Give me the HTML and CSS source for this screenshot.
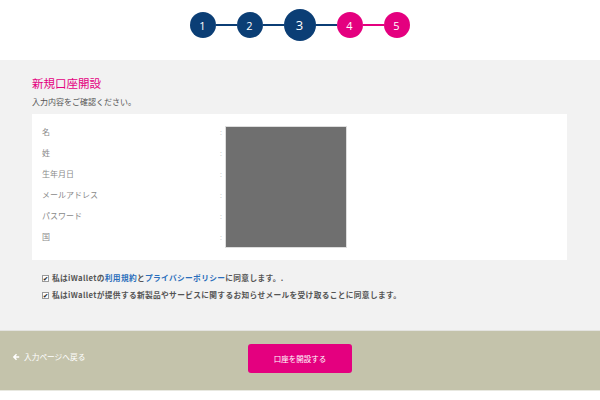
FILE: index.html
```html
<!DOCTYPE html>
<html lang="ja">
<head>
<meta charset="utf-8">
<link rel="stylesheet" href="styles.css">
</head>
<body>
<header class="steps">
  <div class="step done">1</div>
  <div class="line blue"></div>
  <div class="step done">2</div>
  <div class="line blue"></div>
  <div class="step current">3</div>
  <div class="line blue"></div>
  <div class="step todo">4</div>
  <div class="line pink"></div>
  <div class="step todo">5</div>
</header>
<main class="content">
  <h1 class="title">新規口座開設</h1>
  <p class="lead">入力内容をご確認ください。</p>
  <section class="card">
    <div class="rows">
      <div class="row"><span class="label">名</span><span class="colon">:</span></div>
      <div class="row"><span class="label">姓</span><span class="colon">:</span></div>
      <div class="row"><span class="label">生年月日</span><span class="colon">:</span></div>
      <div class="row"><span class="label">メールアドレス</span><span class="colon">:</span></div>
      <div class="row"><span class="label">パスワード</span><span class="colon">:</span></div>
      <div class="row"><span class="label">国</span><span class="colon">:</span></div>
    </div>
    <div class="mask"></div>
  </section>
  <div class="agree">
    <label class="check"><span class="box">✔</span>私はiWalletの<a href="#">利用規約</a>と<a href="#">プライバシーポリシー</a>に同意します。.</label>
    <label class="check"><span class="box">✔</span>私はiWalletが提供する新製品やサービスに関するお知らせメールを受け取ることに同意します。</label>
  </div>
</main>
<footer class="bar">
  <a class="back" href="#"><svg class="arrow" viewBox="0 0 10 10" width="8" height="8"><path d="M5 1 L1 5 L5 9 L6.3 7.7 L4.5 6 H9 V4 H4.5 L6.3 2.3 Z" fill="#fff"/></svg>入力ページへ戻る</a>
  <button class="submit">口座を開設する</button>
  <span></span>
</footer>
</body>
</html>
```
FILE: styles.css
```css
* { box-sizing: border-box; }
html, body { margin: 0; padding: 0; }
body {
  width: 600px;
  height: 400px;
  background: #fff;
  font-family: "Noto Sans CJK JP", "Noto Sans", sans-serif;
  overflow: hidden;
}
.steps {
  height: 60px;
  display: flex;
  align-items: center;
  justify-content: center;
  padding: 0 1px 10px 0;
}
.step {
  width: 26px;
  height: 26px;
  border-radius: 50%;
  color: #fff;
  font-family: "Open Sans", sans-serif;
  font-size: 11px;
  display: flex;
  align-items: center;
  justify-content: center;
  flex: none;
}
.step.done { background: #0b3e75; }
.step.current { background: #0b3e75; width: 32px; height: 32px; font-size: 13px; }
.step.todo { background: #e4007f; }
.line { width: 21px; height: 2px; flex: none; }
.line.blue { background: #0b3e75; }
.line.pink { background: #e4007f; }
.content {
  background: #f2f2f2;
  height: 270px;
  padding: 15px 33px 0 32px;
}
.title {
  margin: 0;
  font-size: 11.5px;
  font-weight: normal;
  color: #e4007f;
  line-height: 16px;
}
.lead {
  margin: 5px 0 0;
  font-size: 8px;
  color: #555;
  line-height: 12px;
}
.card {
  margin-top: 6px;
  background: #fff;
  height: 146px;
  display: flex;
  padding: 12px 0 0 10px;
}
.rows { width: 183px; padding-top: 1px; padding-right: 3px; }
.row {
  height: 21px;
  display: flex;
  justify-content: space-between;
  font-size: 8px;
  color: #8a8a8a;
  line-height: 10px;
}
.colon { color: #c8c8c8; font-size: 7px; }
.mask {
  width: 122px;
  height: 122px;
  background: #6f6f6f;
  border: 1px solid #ddd;
}
.agree {
  padding: 12px 0 0 10px;
  display: flex;
  flex-direction: column;
  gap: 5px;
}
.check {
  font-size: 7.7px;
  letter-spacing: 0.35px;
  color: #555;
  line-height: 12px;
  display: flex;
  align-items: center;
  font-weight: bold;
}
.check a { color: #2a6ebb; text-decoration: none; }
.box {
  width: 7px;
  height: 7px;
  border: 1px solid #999;
  background: #fff;
  font-size: 6px;
  line-height: 6px;
  text-align: center;
  color: #333;
  margin-right: 3px;
  letter-spacing: 0;
}
.bar {
  background: #c4c3ab;
  height: 61px;
  border-top: 1px solid #e3e3e0;
  border-bottom: 1px solid #e8e8e0;
  display: grid;
  grid-template-columns: 1fr auto 1fr;
  align-items: center;
  padding-left: 12px;
}
.back {
  color: #fff;
  text-decoration: none;
  font-size: 7.7px;
  display: flex;
  align-items: center;
  margin-top: -8px;
}
.arrow { margin-right: 4px; }
.submit {
  width: 104px;
  height: 29px;
  border: none;
  border-radius: 3px;
  background: #e4007f;
  color: #fff;
  font-family: "Noto Sans CJK JP", sans-serif;
  font-size: 7.5px;
  margin: -4px 0 0 -12px;
}
```
